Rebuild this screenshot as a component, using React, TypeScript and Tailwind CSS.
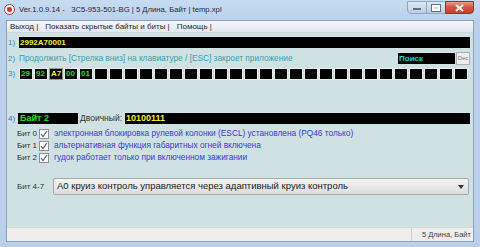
import React from 'react';

const bytes = ['29', '92', 'A7', '00', '01'];
const cells = Array.from({ length: 30 }, (_, i) => bytes[i] ?? '');

const bits = [
  { n: 'Бит 0', text: 'электронная блокировка рулевой колонки (ESCL) установлена (PQ46 только)' },
  { n: 'Бит 1', text: 'альтернативная функция габаритных огней включена' },
  { n: 'Бит 2', text: 'гудок работает только при включенном зажигании' },
];

const Check: React.FC = () => (
  <span className="w-[10px] h-[10px] border border-[#8f8f8f] bg-white flex items-center justify-center shrink-0">
    <svg width="8" height="8" viewBox="0 0 8 8">
      <path d="M1 4 L3 6.5 L7 1" fill="none" stroke="#4a5a8a" strokeWidth="1.2" />
    </svg>
  </span>
);

const App: React.FC = () => {
  return (
    <div
      className="w-[480px] h-[247px] flex flex-col bg-[#b8d0ea] overflow-hidden whitespace-nowrap"
      style={{ fontFamily: '"Liberation Sans", Arial, sans-serif' }}
    >
      {/* title bar */}
      <div className="h-[20px] flex items-start bg-gradient-to-b from-[#c6dcf1] to-[#b9d1eb] pl-[4px] pr-[6px]">
        <div className="mt-[4px] w-[11px] h-[11px] rounded-full border border-[#a04040] bg-white flex items-center justify-center">
          <span className="w-[5px] h-[5px] rounded-full bg-[#d03030]" />
        </div>
        <span className="ml-[4px] mt-[5px] text-[7.7px] leading-[9px] text-[#1e2a3a] whitespace-pre">
          Ver.1.0.9.14 -   3C5-953-501-BG | 5 Длина, Байт | temp.xpl
        </span>
        <div className="ml-auto flex mt-[1px]">
          <div className="w-[20px] h-[13px] border border-[#8ea6c4] rounded-bl-[4px] bg-gradient-to-b from-[#dfe9f5] to-[#bccde2] flex items-end justify-center pb-[3px]">
            <span className="w-[8px] h-[2px] bg-white border border-[#5c6e88]" />
          </div>
          <div className="w-[18px] h-[13px] border-y border-[#8ea6c4] bg-gradient-to-b from-[#dfe9f5] to-[#bccde2] flex items-center justify-center">
            <span className="w-[8px] h-[6px] border-[2px] border-white outline outline-1 outline-[#5c6e88]" />
          </div>
          <div className="w-[29px] h-[13px] border border-[#8a3a2a] rounded-br-[4px] bg-gradient-to-b from-[#e49c8a] via-[#d0543c] to-[#c0432c] flex items-center justify-center">
            <svg width="9" height="8" viewBox="0 0 9 8">
              <path d="M1 1 L8 7 M8 1 L1 7" stroke="#fff" strokeWidth="2" />
            </svg>
          </div>
        </div>
      </div>

      <div className="flex-1 flex flex-col mx-[6px] border border-[#8aa2bf] bg-[#cfe1e2]">
        {/* menu */}
        <div className="h-[12px] flex items-center bg-gradient-to-b from-[#f6f6fb] to-[#e2e8f1] text-[8px] text-[#2a2a2a] pl-[3px] gap-[7px] border-b border-[#cdd6e2]">
          <span>Выход |</span>
          <span>Показать скрытые байты и биты |</span>
          <span>Помощь |</span>
        </div>

        <div className="flex-1 flex flex-col pt-[4px] pr-[3px] text-[8px]">
          {/* row 1 */}
          <div className="flex items-center h-[11px]">
            <span className="w-[12px] pl-[1px] text-[#3a8fb8] text-[8px]">1)</span>
            <div className="flex-1 h-[11px] bg-black text-[#f0f020] font-bold text-[8px] leading-[11px] pl-[1px]">2992A70001</div>
          </div>

          {/* row 2 */}
          <div className="flex items-center h-[13px] mt-[4px]">
            <span className="w-[12px] pl-[1px] text-[#3a8fb8] text-[8px]">2)</span>
            <span className="text-[#3c9eb0] text-[8.3px]">Продолжить [Стрелка вниз] на клавиатуре / [ESC] закроет приложение</span>
            <div className="ml-auto w-[57px] h-[11px] bg-black text-[#10d8d8] font-bold text-[8px] leading-[11px] pl-[1px]">Поиск</div>
            <div className="ml-[1px] w-[14px] h-[13px] bg-[#eeeeee] border border-[#b0b0b0] text-[#777] text-[6px] leading-[11px] text-center">Dec</div>
          </div>

          {/* row 3 */}
          <div className="flex items-center h-[12px] mt-[3px]">
            <span className="w-[12px] pl-[1px] text-[#3a8fb8] text-[8px]">3)</span>
            <div className="flex gap-[1px]">
              {cells.map((b, i) => (
                <div
                  key={i}
                  className={`w-[14px] h-[12px] bg-black border text-[8px] font-bold leading-[10px] pl-[1px] ${
                    i === 2 ? 'border-[#9a9a8a] text-[#f0f020]' : 'border-[#e4ecec] text-[#22e022]'
                  }`}
                >
                  {b}
                </div>
              ))}
            </div>
          </div>

          {/* row 4 */}
          <div className="flex items-center h-[11px] mt-[33px]">
            <span className="w-[11px] pl-[1px] text-[#3a6fd0] text-[8px]">4)</span>
            <div className="w-[60px] h-[11px] bg-black text-[#22e022] font-bold text-[9px] leading-[11px] pl-[2px]">Байт 2</div>
            <span className="ml-[2px] w-[45px] text-[#333] text-[8.5px]">Двоичный:</span>
            <div className="flex-1 h-[11px] bg-black text-[#f0f020] font-bold text-[9px] leading-[11px] pl-[1px]">10100111</div>
          </div>

          {/* bits */}
          <div className="flex flex-col mt-[4px] gap-[1px]">
            {bits.map(b => (
              <div key={b.n} className="flex items-center h-[11px]">
                <span className="ml-[10px] w-[22px] text-[#333] text-[8px]">{b.n}</span>
                <Check />
                <span className="ml-[5px] text-[#3a3ae0] text-[8.3px]">{b.text}</span>
              </div>
            ))}
          </div>

          {/* bit 4-7 */}
          <div className="flex items-center h-[17px] mt-[15px]">
            <span className="ml-[10px] w-[36px] text-[#333] text-[8px]">Бит 4-7</span>
            <div className="w-[416px] h-[17px] border border-[#a8a8a8] rounded-[2px] bg-gradient-to-b from-[#f4f4f4] to-[#dcdcdc] flex items-center pl-[3px] pr-[4px]">
              <span className="text-[9.5px] text-[#222]">A0 круиз контроль управляется через адаптивный круиз контроль</span>
              <svg className="ml-auto" width="6" height="4" viewBox="0 0 6 4">
                <path d="M0 0 L6 0 L3 4 Z" fill="#333" />
              </svg>
            </div>
          </div>
        </div>

        {/* status bar */}
        <div className="h-[14px] flex items-center bg-[#f0eded] border-t border-[#d8d8d8] text-[7.5px] text-[#444]">
          <span className="ml-auto h-full border-l border-[#d0d0d0] pl-[10px] pr-[2px] leading-[14px]">5 Длина, Байт</span>
        </div>
      </div>
      <div className="h-[5px]" />
    </div>
  );
};

export default App;
